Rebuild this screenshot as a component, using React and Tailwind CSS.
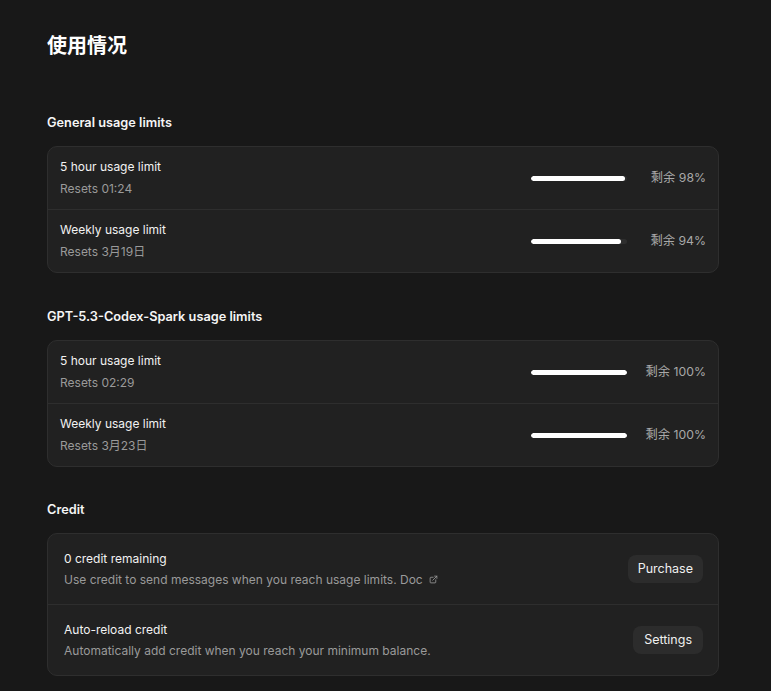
import { ExternalLink } from "lucide-react";

const general = [
  { title: "5 hour usage limit", reset: "Resets 01:24", pct: 98 },
  { title: "Weekly usage limit", reset: "Resets 3月19日", pct: 94 },
];

const spark = [
  { title: "5 hour usage limit", reset: "Resets 02:29", pct: 100 },
  { title: "Weekly usage limit", reset: "Resets 3月23日", pct: 100 },
];

function LimitRow({ item, last }) {
  return (
    <div
      className={`flex items-center px-[12px] ${
        last ? "h-[62px]" : "h-[63px] border-b border-[#2e2e2e]"
      }`}
    >
      <div className="flex-1">
        <div className="text-[12px] leading-[16px] text-[#f2f2f2]">{item.title}</div>
        <div className="mt-[6px] text-[12px] leading-[16px] text-[#9a9a9a]">{item.reset}</div>
      </div>
      <div className="flex items-center gap-[18px]">
        <div className="w-[96px] h-[5px] rounded-full bg-[#2e2e2e] overflow-hidden">
          <div className="h-full rounded-full bg-white" style={{ width: `${item.pct}%` }} />
        </div>
        <div className="w-[61px] whitespace-nowrap text-right text-[12.25px] text-[#a8a8a8]">
          剩余 {item.pct}%
        </div>
      </div>
    </div>
  );
}

function Section({ title, items }) {
  return (
    <div>
      <h2 className="text-[12.75px] font-semibold text-[#f5f5f5] leading-[18px] translate-y-[1px]">{title}</h2>
      <div className="mt-[15px] rounded-[10px] border border-[#2e2e2e] bg-[#212121]">
        {items.map((it, i) => (
          <LimitRow key={i} item={it} last={i === items.length - 1} />
        ))}
      </div>
    </div>
  );
}

export default function App() {
  return (
    <div
      className="min-h-[691px] bg-[#181818] px-[47px] pt-[33px] pb-4"
      style={{ fontFamily: 'Inter, "Noto Sans CJK SC", sans-serif' }}
    >
      <div className="w-[672px]">
        <h1 className="text-[20px] font-semibold text-white leading-[26px]">使用情况</h1>

        <div className="mt-[54px] space-y-[34px]">
          <Section title="General usage limits" items={general} />
          <Section title="GPT-5.3-Codex-Spark usage limits" items={spark} />

          <div>
            <h2 className="text-[12.75px] font-semibold text-[#f5f5f5] leading-[18px]">Credit</h2>
            <div className="mt-[14px] rounded-[10px] border border-[#2e2e2e] bg-[#212121]">
              <div className="flex items-center h-[71px] pl-[16px] pr-[15px] border-b border-[#2e2e2e]">
                <div className="flex-1">
                  <div className="text-[12px] leading-[16px] text-[#f2f2f2]">0 credit remaining</div>
                  <div className="mt-[5px] flex items-center gap-[6px] text-[12px] leading-[16px] text-[#9a9a9a]">
                    Use credit to send messages when you reach usage limits. Doc
                    <ExternalLink className="w-[9px] h-[9px]" strokeWidth={2.2} />
                  </div>
                </div>
                <button className="h-[28px] px-[10px] rounded-[8px] bg-[#2c2c2c] text-[12.5px] text-[#f0f0f0]">
                  Purchase
                </button>
              </div>
              <div className="flex items-center h-[70px] pl-[16px] pr-[15px]">
                <div className="flex-1">
                  <div className="text-[12px] leading-[16px] text-[#f2f2f2]">Auto-reload credit</div>
                  <div className="mt-[5px] text-[12px] leading-[16px] text-[#9a9a9a]">
                    Automatically add credit when you reach your minimum balance.
                  </div>
                </div>
                <button className="h-[28px] px-[11px] rounded-[8px] bg-[#2c2c2c] text-[12.5px] text-[#f0f0f0]">
                  Settings
                </button>
              </div>
            </div>
          </div>
        </div>
      </div>
    </div>
  );
}
